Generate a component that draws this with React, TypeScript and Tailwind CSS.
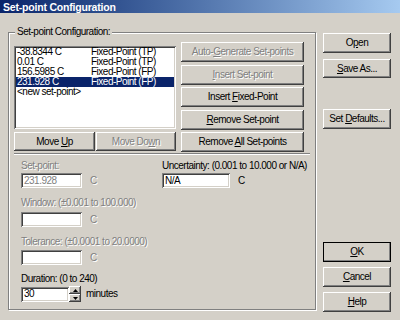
import React from 'react';

const raised =
  'bg-[#d4d0c8] shadow-[inset_-1px_-1px_#404040,inset_1px_1px_#ffffff,inset_-2px_-2px_#808080,inset_2px_2px_#d4d0c8]';
const sunken =
  'bg-white shadow-[inset_1px_1px_#808080,inset_-1px_-1px_#ffffff,inset_2px_2px_#404040,inset_-2px_-2px_#d4d0c8]';
const grayText = 'text-[#808080] [text-shadow:1px_1px_#ffffff]';

function Btn({
  label,
  u,
  disabled = false,
  isDefault = false,
  className = '',
}: {
  label: string;
  u: number;
  disabled?: boolean;
  isDefault?: boolean;
  className?: string;
}) {
  // u = index of the mnemonic letter
  return (
    <div
      className={`flex items-center justify-center ${raised} ${
        isDefault ? 'outline outline-1 outline-black -outline-offset-1' : ''
      } ${disabled ? grayText : 'text-black'} ${className}`}
    >
      <span>
        {label.slice(0, u)}
        <span className="underline underline-offset-1">{label[u]}</span>
        {label.slice(u + 1)}
      </span>
    </div>
  );
}

const rows = [
  { v: '-38.8344 C', t: 'Fixed-Point (TP)' },
  { v: '0.01 C', t: 'Fixed-Point (TP)' },
  { v: '156.5985 C', t: 'Fixed-Point (FP)' },
  { v: '231.928 C', t: 'Fixed-Point (FP)', sel: true },
  { v: '<new set-point>', t: '' },
];

function Field({ value = '', w = 'w-[61px]', gray = false }: { value?: string; w?: string; gray?: boolean }) {
  return (
    <div className={`h-[15px] ${w} ${sunken} pl-[3px] flex items-center ${gray ? 'text-[#808080]' : 'text-black'}`}>
      {value}
    </div>
  );
}

export default function App() {
  return (
    <div className="w-[400px] h-[320px] overflow-hidden bg-[#d4d0c8] font-['Liberation_Sans',Arial,sans-serif] text-[10px] leading-[12px] tracking-[-0.5px] text-black">
      {/* title bar */}
      <div className="h-[13px] bg-gradient-to-r from-[#0a246a] to-[#a6caf0] pl-[3px] flex items-center text-white font-bold text-[10.5px] tracking-[-0.2px]">
        Set-point Configuration
      </div>

      <div className="flex pl-[8px] pt-[19px]">
        {/* group box */}
        <div className="relative w-[308px] h-[278px] border border-[#808080] shadow-[inset_1px_1px_#ffffff,1px_1px_#ffffff] pt-[9px] px-[5px]">
          <div className="absolute left-[6px] top-[-7px] bg-[#d4d0c8] px-[2px]">Set-point Configuration:</div>

          <div className="flex">
            <div className="w-[162px] flex flex-col">
              <div className={`mt-[4px] h-[83px] ${sunken} p-[2px] pt-[1px]`}>
                {rows.map((r) => (
                  <div
                    key={r.v}
                    className={`h-[10px] leading-[10px] flex ${r.sel ? 'bg-[#0a246a] text-white' : ''}`}
                  >
                    <span className="w-[75px] pl-[1px]">{r.v}</span>
                    <span>{r.t}</span>
                  </div>
                ))}
              </div>
              <div className="mt-[3px] flex gap-[1px]">
                <Btn label="Move Up" u={5} className="w-[81px] h-[19px]" />
                <Btn label="Move Down" u={7} disabled className="w-[80px] h-[19px]" />
              </div>
            </div>
            <div className="ml-[5px] w-[123px] flex flex-col gap-[2.5px]">
              <Btn label="Auto-Generate Set-points" u={5} disabled className="h-[20px]" />
              <Btn label="Insert Set-point" u={0} disabled className="h-[20px]" />
              <Btn label="Insert Fixed-Point" u={7} className="h-[20px]" />
              <Btn label="Remove Set-point" u={0} className="h-[20px]" />
              <Btn label="Remove All Set-points" u={7} className="h-[20px]" />
            </div>
          </div>

          {/* separator */}
          <div className="mt-[1px] h-[2px] border-t border-[#808080] border-b border-b-white" />

          <div className="flex pl-[7px]">
            <div className="w-[141px] flex flex-col">
              <div className={`mt-[5px] h-[12px] ${grayText}`}>Set-point:</div>
              <div className="mt-[1px] flex items-center">
                <Field value="231.928" gray />
                <span className={`ml-[8px] ${grayText}`}>C</span>
              </div>
              <div className={`mt-[9px] h-[12px] ${grayText}`}>Window: (±0.001 to 100.000)</div>
              <div className="mt-[3px] flex items-center">
                <Field />
                <span className={`ml-[8px] ${grayText}`}>C</span>
              </div>
              <div className={`mt-[9px] h-[12px] ${grayText}`}>Tolerance: (±0.0001 to 20.0000)</div>
              <div className="mt-[2px] flex items-center">
                <Field />
                <span className={`ml-[8px] ${grayText}`}>C</span>
              </div>
              <div className="mt-[8px] h-[12px]">Duration: (0 to 240)</div>
              <div className="mt-[1px] flex items-center">
                <Field value="30" w="w-[48px]" />
                <div className="w-[12px] h-[16px] flex flex-col">
                  <div className={`h-[8px] ${raised} flex items-center justify-center`}>
                    <svg width="5" height="3" viewBox="0 0 5 3">
                      <path d="M0 3 L2.5 0 L5 3 Z" fill="#000" />
                    </svg>
                  </div>
                  <div className={`h-[8px] ${raised} flex items-center justify-center`}>
                    <svg width="5" height="3" viewBox="0 0 5 3">
                      <path d="M0 0 L2.5 3 L5 0 Z" fill="#000" />
                    </svg>
                  </div>
                </div>
                <span className="ml-[5px]">minutes</span>
              </div>
            </div>
            <div className="flex flex-col">
              <div className="mt-[5px] h-[12px]">Uncertainty: (0.001 to 10.000 or N/A)</div>
              <div className="mt-[1px] flex items-center">
                <Field value="N/A" w="w-[68px]" />
                <span className="ml-[8px]">C</span>
              </div>
            </div>
          </div>
        </div>

        {/* right buttons */}
        <div className="ml-[7px] w-[68px] flex flex-col">
          <Btn label="Open" u={1} className="mt-[1px] h-[20px]" />
          <Btn label="Save As..." u={0} className="mt-[6px] h-[19px]" />
          <Btn label="Set Defaults..." u={4} className="mt-[31px] h-[20px]" />
          <Btn label="OK" u={0} isDefault className="mt-[113px] h-[20px]" />
          <Btn label="Cancel" u={0} className="mt-[5px] h-[20px]" />
          <Btn label="Help" u={0} className="mt-[5px] h-[20px]" />
        </div>
      </div>
    </div>
  );
}
